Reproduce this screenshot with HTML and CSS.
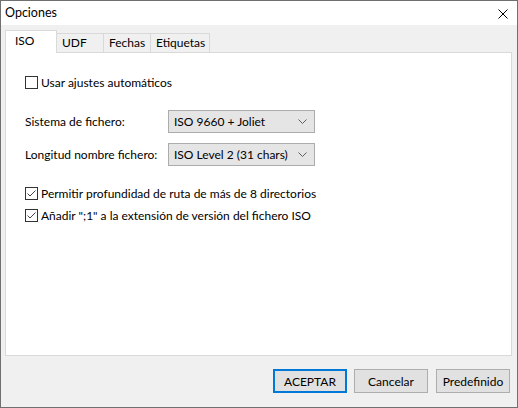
FILE: index.html
```html
<!DOCTYPE html>
<html lang="es">
<head>
    <meta charset="UTF-8">
    <meta name="viewport" content="width=device-width, initial-scale=1.0">
    <title>Opciones</title>
    <link rel="stylesheet" href="styles.css">
</head>
<body>
    <div class="window">
        <div class="titlebar">
            <span class="title">Opciones</span>
            <button class="close-btn" aria-label="Cerrar">
                <svg width="10" height="10" viewBox="0 0 10 10">
                    <path d="M0.5 0.5 L9.5 9.5 M9.5 0.5 L0.5 9.5" stroke="#000" stroke-width="1" fill="none"/>
                </svg>
            </button>
        </div>

        <!-- Tab strip -->
        <div class="tabs">
            <div class="tab active tab-iso">ISO</div>
            <div class="tab tab-udf">UDF</div>
            <div class="tab tab-fechas">Fechas</div>
            <div class="tab tab-etiquetas">Etiquetas</div>
        </div>

        <div class="panel">
            <label class="check">
                <span class="box"></span>
                <span>Usar ajustes automáticos</span>
            </label>

            <div class="fields">
                <span class="field-label">Sistema de fichero:</span>
                <div class="combo">
                    <span>ISO 9660 + Joliet</span>
                    <svg class="chevron" width="9" height="5" viewBox="0 0 9 5">
                        <path d="M0.5 0.5 L4.5 4.5 L8.5 0.5" stroke="#606060" stroke-width="1" fill="none"/>
                    </svg>
                </div>
                <span class="field-label">Longitud nombre fichero:</span>
                <div class="combo">
                    <span>ISO Level 2 (31 chars)</span>
                    <svg class="chevron" width="9" height="5" viewBox="0 0 9 5">
                        <path d="M0.5 0.5 L4.5 4.5 L8.5 0.5" stroke="#606060" stroke-width="1" fill="none"/>
                    </svg>
                </div>
            </div>

            <label class="check check-depth">
                <span class="box">
                    <svg width="11" height="11" viewBox="0 0 11 11">
                        <path d="M1.5 5.5 L4 8 L9.5 2.5" stroke="#444" stroke-width="1" fill="none"/>
                    </svg>
                </span>
                <span>Permitir profundidad de ruta de más de 8 directorios</span>
            </label>
            <label class="check check-version">
                <span class="box">
                    <svg width="11" height="11" viewBox="0 0 11 11">
                        <path d="M1.5 5.5 L4 8 L9.5 2.5" stroke="#444" stroke-width="1" fill="none"/>
                    </svg>
                </span>
                <span>Añadir ";1" a la extensión de versión del fichero ISO</span>
            </label>
        </div>

        <div class="footer">
            <button class="btn btn-default">ACEPTAR</button>
            <button class="btn">Cancelar</button>
            <button class="btn">Predefinido</button>
        </div>
    </div>
</body>
</html>
```

FILE: styles.css
```css
/* Reset */
* {
    margin: 0;
    padding: 0;
    box-sizing: border-box;
}

body {
    font-family: 'Lato', 'Liberation Sans', sans-serif;
    font-size: 12px;
    color: #000;
    background: #f0f0f0;
    white-space: nowrap;
}

/* Dialog frame */
.window {
    width: 518px;
    height: 408px;
    border: 1px solid #707070;
    background: #f0f0f0;
    display: flex;
    flex-direction: column;
}

.titlebar {
    height: 24px;
    background: #fff;
    display: flex;
    align-items: center;
    justify-content: space-between;
    padding: 0 9px 0 4px;
}

.title {
    font-size: 12.5px;
    line-height: 16px;
}

.close-btn {
    border: none;
    background: none;
    width: 10px;
    height: 10px;
    display: flex;
    margin-top: 2px;
}

/* Tabs */
.tabs {
    display: flex;
    align-items: flex-end;
    height: 23px;
    margin: 5px 0 -1px 4px;
    position: relative;
    z-index: 1;
}

.tab {
    height: 19px;
    margin-bottom: 1px;
    border: 1px solid #d9d9d9;
    border-bottom: none;
    background: #f0f0f0;
    line-height: 18px;
    padding-left: 5px;
    margin-left: -1px;
}

.tab.active {
    height: 23px;
    margin-bottom: 0;
    margin-left: 0;
    background: #fff;
    line-height: 19px;
    padding-left: 9px;
}

.tab-iso { width: 52px; }
.tab-udf { width: 48px; }
.tab-fechas { width: 48px; }
.tab-etiquetas { width: 60px; }

/* Tab page */
.panel {
    height: 304px;
    margin: 0 5px 0 4px;
    background: #fff;
    border: 1px solid #d9d9d9;
    padding: 22px 0 0 19px;
    display: flex;
    flex-direction: column;
    align-items: flex-start;
}

.check {
    display: flex;
    align-items: center;
    height: 15px;
    gap: 3px;
}

.box {
    width: 13px;
    height: 13px;
    border: 1px solid #333;
    background: #fff;
    display: flex;
}

.check-depth {
    margin-top: 20px;
}

.check-version {
    margin-top: 7px;
}

.fields {
    margin-top: 20px;
    display: grid;
    grid-template-columns: 143px 147px;
    grid-auto-rows: 23px;
    row-gap: 10px;
    align-items: center;
}

.combo {
    height: 23px;
    background: #e5e5e5;
    border: 1px solid #acacac;
    display: flex;
    align-items: center;
    justify-content: space-between;
    padding: 0 7px 0 5px;
}

.chevron {
    display: block;
}

/* Buttons */
.footer {
    display: flex;
    justify-content: flex-end;
    gap: 8px;
    padding: 13px 7px 0 0;
}

.btn {
    width: 74px;
    height: 24px;
    font-family: inherit;
    font-size: 12px;
    background: #e1e1e1;
    border: 1px solid #adadad;
    color: #000;
}

.btn-default {
    border: 2px solid #0078d7;
    margin-right: -1px;
}
```
